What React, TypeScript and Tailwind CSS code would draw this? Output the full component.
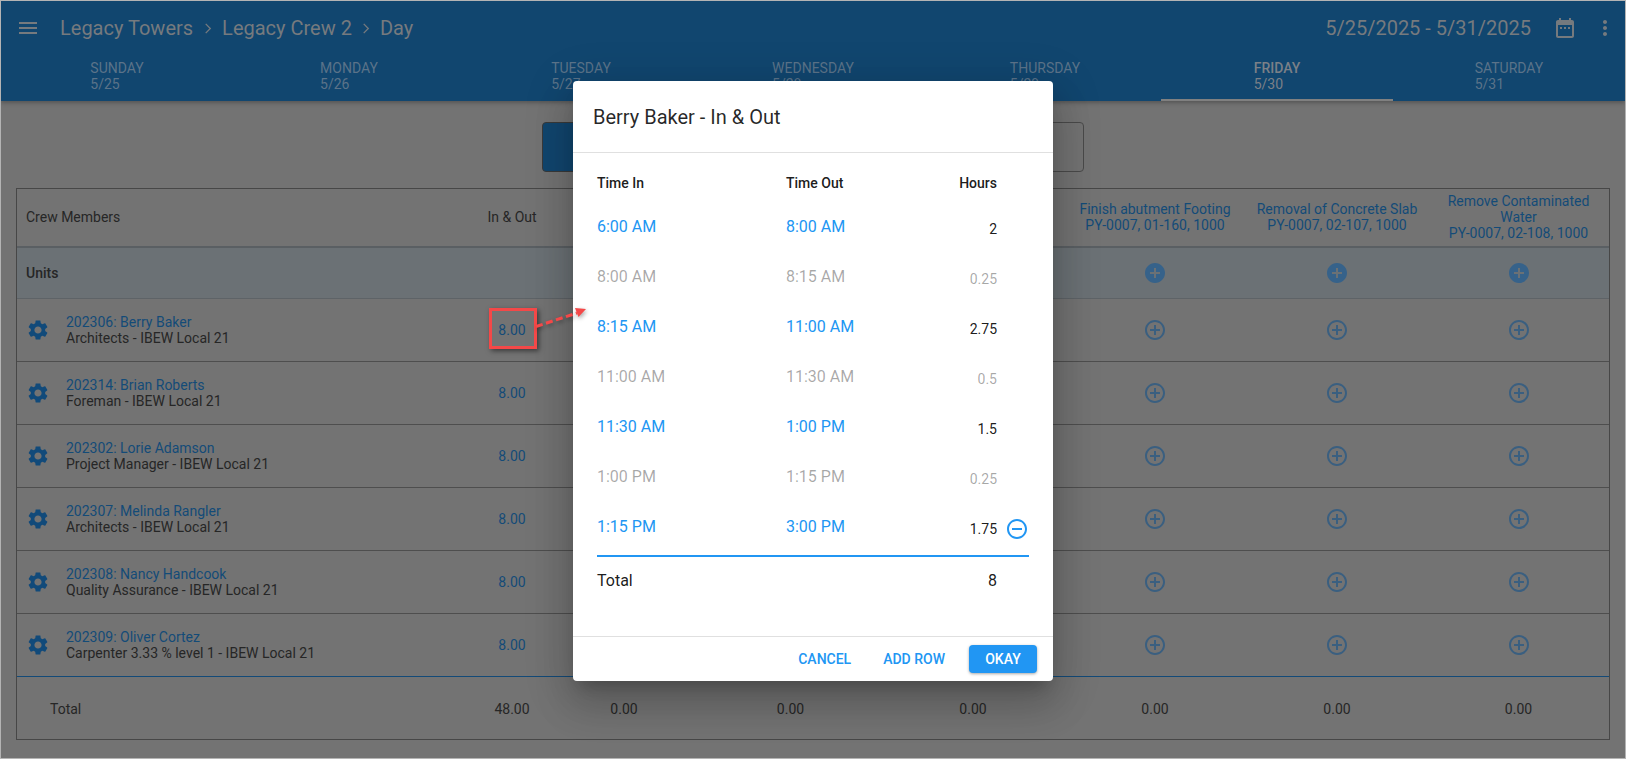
const ICONS = {
  menu: "M3 18h18v-2H3v2zm0-5h18v-2H3v2zm0-7v2h18V6H3z",
  settings:
    "M19.14 12.94c.04-.3.06-.61.06-.94 0-.32-.02-.64-.07-.94l2.03-1.58c.18-.14.23-.41.12-.61l-1.92-3.32c-.12-.22-.37-.29-.59-.22l-2.39.96c-.5-.38-1.03-.7-1.62-.94l-.36-2.54c-.04-.24-.24-.41-.48-.41h-3.84c-.24 0-.43.17-.47.41l-.36 2.54c-.59.24-1.13.57-1.62.94l-2.39-.96c-.22-.08-.47 0-.59.22L2.74 8.87c-.12.21-.08.47.12.61l2.03 1.58c-.05.3-.09.63-.09.94s.02.64.07.94l-2.03 1.58c-.18.14-.23.41-.12.61l1.92 3.32c.12.22.37.29.59.22l2.39-.96c.5.38 1.03.7 1.62.94l.36 2.54c.05.24.24.41.48.41h3.84c.24 0 .44-.17.47-.41l.36-2.54c.59-.24 1.13-.56 1.62-.94l2.39.96c.22.08.47 0 .59-.22l1.92-3.32c.12-.22.07-.47-.12-.61l-2.01-1.58zM12 15.6c-1.98 0-3.6-1.62-3.6-3.6s1.62-3.6 3.6-3.6 3.6 1.62 3.6 3.6-1.62 3.6-3.6 3.6z",
  addFilled:
    "M12 2C6.48 2 2 6.48 2 12s4.48 10 10 10 10-4.48 10-10S17.52 2 12 2zm5 11h-4v4h-2v-4H7v-2h4V7h2v4h4v2z",
  addOutline:
    "M13 7h-2v4H7v2h4v4h2v-4h4v-2h-4V7zm-1-5C6.48 2 2 6.48 2 12s4.48 10 10 10 10-4.48 10-10S17.52 2 12 2zm0 18c-4.41 0-8-3.59-8-8s3.59-8 8-8 8 3.59 8 8-3.59 8-8 8z",
  removeOutline:
    "M7 11v2h10v-2H7zm5-9C6.48 2 2 6.48 2 12s4.48 10 10 10 10-4.48 10-10S17.52 2 12 2zm0 18c-4.41 0-8-3.59-8-8s3.59-8 8-8 8 3.59 8 8-3.59 8-8 8z",
  calendar:
    "M9 11H7v2h2v-2zm4 0h-2v2h2v-2zm4 0h-2v2h2v-2zm2-7h-1V2h-2v2H8V2H6v2H5c-1.11 0-1.99.9-1.99 2L3 20c0 1.1.89 2 2 2h14c1.1 0 2-.9 2-2V6c0-1.1-.9-2-2-2zm0 16H5V9h14v11z",
  more: "M12 8c1.1 0 2-.9 2-2s-.9-2-2-2-2 .9-2 2 .9 2 2 2zm0 2c-1.1 0-2 .9-2 2s.9 2 2 2 2-.9 2-2-.9-2-2-2zm0 6c-1.1 0-2 .9-2 2s.9 2 2 2 2-.9 2-2-.9-2-2-2z",
};

function Icon({ name, className }: { name: keyof typeof ICONS; className?: string }) {
  return (
    <svg viewBox="0 0 24 24" fill="currentColor" className={className}>
      <path d={ICONS[name]} />
    </svg>
  );
}

function Crumb({ className }: { className: string }) {
  return (
    <svg viewBox="0 0 8 12" className={`h-[11px] w-[8px] ${className}`} fill="none" stroke="currentColor" strokeWidth="1.4">
      <path d="M1.5 1l5 5-5 5" />
    </svg>
  );
}

const days = [
  ["SUNDAY", "5/25"],
  ["MONDAY", "5/26"],
  ["TUESDAY", "5/27"],
  ["WEDNESDAY", "5/28"],
  ["THURSDAY", "5/29"],
  ["FRIDAY", "5/30"],
  ["SATURDAY", "5/31"],
];

const crew = [
  ["202306: Berry Baker", "Architects - IBEW Local 21"],
  ["202314: Brian Roberts", "Foreman - IBEW Local 21"],
  ["202302: Lorie Adamson", "Project Manager - IBEW Local 21"],
  ["202307: Melinda Rangler", "Architects - IBEW Local 21"],
  ["202308: Nancy Handcook", "Quality Assurance - IBEW Local 21"],
  ["202309: Oliver Cortez", "Carpenter 3.33 % level 1 - IBEW Local 21"],
];

const tasks = [
  ["Finish abutment Footing", "PY-0007, 01-160, 1000"],
  ["Removal of Concrete Slab", "PY-0007, 02-107, 1000"],
  ["Remove Contaminated Water", "PY-0007, 02-108, 1000"],
];

const entries = [
  ["6:00 AM", "8:00 AM", "2", true],
  ["8:00 AM", "8:15 AM", "0.25", false],
  ["8:15 AM", "11:00 AM", "2.75", true],
  ["11:00 AM", "11:30 AM", "0.5", false],
  ["11:30 AM", "1:00 PM", "1.5", true],
  ["1:00 PM", "1:15 PM", "0.25", false],
  ["1:15 PM", "3:00 PM", "1.75", true],
] as const;

const cols = "grid grid-cols-[458px_74px_150px_183px_182px_182px_182px_181px]";
const rowCols = "grid grid-cols-[189px_120px_91px_32px]";

export default function App() {
  return (
    <div className="relative h-[759px] w-[1626px] overflow-hidden border border-[#b4b4b4] bg-[#737373] font-[Roboto,sans-serif] text-sm text-[#262626]">
      {/* app bar, dimmed by the open dialog */}
      <header className="h-[100px] bg-[#11466f] text-[#767a7e] shadow-[0_2px_4px_rgba(0,0,0,0.25)]">
        <div className="flex h-[54px] items-center pl-[15px] pr-[8px]">
          <Icon name="menu" className="h-6 w-6" />
          <div className="ml-5 flex items-center text-[20px]">
            <span>Legacy Towers</span>
            <Crumb className="mx-[10.5px]" />
            <span>Legacy Crew 2</span>
            <Crumb className="mx-[10px]" />
            <span>Day</span>
          </div>
          <span className="ml-auto text-[20px]">5/25/2025 - 5/31/2025</span>
          <Icon name="calendar" className="ml-[22px] h-6 w-6" />
          <Icon name="more" className="ml-[16px] h-6 w-6" />
        </div>
        <div className="flex h-[46px]">
          {days.map(([day, date]) => (
            <div
              key={day}
              className={`flex flex-1 justify-center border-b-2 pt-[5px] leading-4 ${
                day === "FRIDAY" ? "border-[#808080] font-medium text-[#7b8087]" : "border-transparent text-[#5b7389]"
              }`}
            >
              <div>
                <div>{day}</div>
                <div className="font-normal">{date}</div>
              </div>
            </div>
          ))}
        </div>
      </header>

      {/* toggle */}
      <div className="mt-[21px] flex justify-center">
        <div className="h-[50px] w-[271px] rounded-l border border-[#3a3a3a] bg-[#11466f]" />
        <div className="h-[50px] w-[271px] rounded-r border border-[#4a4a4a]" />
      </div>

      {/* crew table */}
      <div className="mx-[15px] mt-4 border border-[#474747]">
        <div className={`${cols} h-[59px] items-center border-b-2 border-[#5a5f63] pb-[2px] text-center leading-4`}>
          <div className="pl-[9px] text-left">Crew Members</div>
          <div>In &amp; Out</div>
          <div />
          <div />
          <div />
          {tasks.map(([title, code]) => (
            <div key={code} className="px-2 text-[#134b78]">
              <div>{title}</div>
              <div>{code}</div>
            </div>
          ))}
        </div>

        <div className={`${cols} h-[51px] items-center border-b border-[#5e6367] bg-[#6b7175]`}>
          <div className="pl-[9px] font-medium">Units</div>
          <div />
          <div />
          <div />
          <div />
          {tasks.map(([title]) => (
            <div key={title} className="flex justify-center">
              <Icon name="addFilled" className="h-6 w-6 text-[#36628a]" />
            </div>
          ))}
        </div>

        {crew.map(([name, role], i) => (
          <div
            key={name}
            className={`${cols} h-[63px] items-center border-b ${i === 5 ? "border-[#134a78]" : "border-[#4e4e4e]"}`}
          >
            <div className="flex items-center pl-[9px] leading-4">
              <Icon name="settings" className="h-6 w-6 text-[#114a7a]" />
              <div className="ml-4">
                <div className="text-[#134b78]">{name}</div>
                <div>{role}</div>
              </div>
            </div>
            <div className="text-center text-[#134b78]">8.00</div>
            <div />
            <div />
            <div />
            {tasks.map(([title]) => (
              <div key={title} className="flex justify-center">
                <Icon name="addOutline" className="h-6 w-6 text-[#3a5f80]" />
              </div>
            ))}
          </div>
        ))}

        <div className={`${cols} h-[62px] items-center pt-[2px] text-center`}>
          <div className="pl-[33px] text-left">Total</div>
          <div>48.00</div>
          {[0, 1, 2, 3, 4, 5].map((n) => (
            <div key={n}>0.00</div>
          ))}
        </div>
      </div>

      {/* dialog */}
      <div className="absolute left-[572px] top-[80px] flex h-[600px] w-[480px] flex-col rounded bg-white shadow-[0_11px_15px_-7px_rgba(0,0,0,0.2),0_24px_38px_3px_rgba(0,0,0,0.14),0_9px_46px_8px_rgba(0,0,0,0.12)]">
        <div className="flex h-[72px] items-center border-b border-[#e0e0e0] px-5 pt-[2px] text-[20px] text-black/85">
          Berry Baker - In &amp; Out
        </div>
        <div className="flex-1 px-6">
          <div className={`${rowCols} h-[48px] pt-[20px] font-medium leading-5 text-black/90`}>
            <div>Time In</div>
            <div>Time Out</div>
            <div className="text-right">Hours</div>
          </div>
          {entries.map(([start, end, hours, on], i) => (
            <div key={i} className={`${rowCols} h-[50px] items-center text-base`}>
              <div className={`pt-[2px] ${on ? "text-[#2196f3]" : "text-black/35"}`}>{start}</div>
              <div className={`pt-[2px] ${on ? "text-[#2196f3]" : "text-black/35"}`}>{end}</div>
              <div className={`pt-[5px] text-right text-sm ${on ? "text-black/90" : "text-black/35"}`}>{hours}</div>
              {i === entries.length - 1 && (
                <div className="pl-2 pt-[6px]">
                  <Icon name="removeOutline" className="h-6 w-6 text-[#2196f3]" />
                </div>
              )}
            </div>
          ))}
          <div className="mt-1 h-[2px] bg-[#2196f3]" />
          <div className={`${rowCols} h-[46px] items-center pt-[2px] text-base text-black/90`}>
            <div>Total</div>
            <div />
            <div className="text-right">8</div>
          </div>
        </div>
        <div className="flex h-[45px] items-center justify-end gap-4 border-t border-[#e0e0e0] pr-4 text-sm font-medium">
          <span className="px-2 text-[#2196f3]">CANCEL</span>
          <span className="px-2 text-[#2196f3]">ADD ROW</span>
          <span className="flex h-[28px] w-[68px] items-center justify-center rounded bg-[#2196f3] text-white shadow-[0_1px_3px_rgba(0,0,0,0.35)]">
            OKAY
          </span>
        </div>
      </div>

      {/* callout over the source cell */}
      <div className="absolute left-[488px] top-[307px] h-[41px] w-[48px] border-[3px] border-[#f44848] shadow-[2px_2px_5px_rgba(0,0,0,0.5)]" />
      <svg className="absolute left-[530px] top-[300px] h-[40px] w-[60px] drop-shadow-[1px_2px_2px_rgba(0,0,0,0.35)]" viewBox="0 0 60 40">
        <path d="M5 25.5L46 12" stroke="#f44848" strokeWidth="3" strokeDasharray="7 3.5" fill="none" />
        <path d="M55 8L44 7L47.5 16Z" fill="#f44848" />
      </svg>
    </div>
  );
}
